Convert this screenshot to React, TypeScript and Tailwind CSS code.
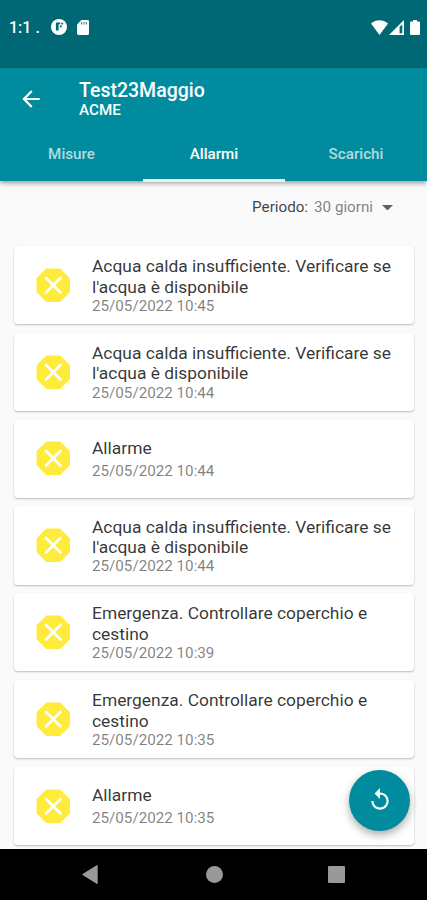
import React from "react";

interface Alarm {
  title: string;
  date: string;
}

const alarms: Alarm[] = [
  { title: "Acqua calda insufficiente. Verificare se l'acqua è disponibile", date: "25/05/2022 10:45" },
  { title: "Acqua calda insufficiente. Verificare se l'acqua è disponibile", date: "25/05/2022 10:44" },
  { title: "Allarme", date: "25/05/2022 10:44" },
  { title: "Acqua calda insufficiente. Verificare se l'acqua è disponibile", date: "25/05/2022 10:44" },
  { title: "Emergenza. Controllare coperchio e cestino", date: "25/05/2022 10:39" },
  { title: "Emergenza. Controllare coperchio e cestino", date: "25/05/2022 10:35" },
  { title: "Allarme", date: "25/05/2022 10:35" },
];

const tabs = ["Misure", "Allarmi", "Scarichi"];

function StatusBar() {
  return (
    <div className="flex h-[68px] items-start justify-between bg-[#006874] pt-[17.5px] pr-[7px] pl-[9px] text-white">
      <div className="flex h-[19px] items-center">
        <span className="w-[42px] pt-px text-[16px] font-medium whitespace-pre">1:1 .</span>
        <svg className="h-4 w-4" viewBox="0 0 16 16">
          <circle cx="8" cy="8" r="8" fill="currentColor" />
          <path d="M4.9 4.500Q4.900 3.400 6 3.400H9.200V5.300H7.600V11.500H4.900zM10.300 3.700h1.800v1.700h-1.800zM8.800 6.400h2v1.800h-2z" fill="#006874" />
        </svg>
        <svg className="ml-[10px] h-[15px] w-3" viewBox="0 0 12 15">
          <path d="M4.500 0H10.600Q12 0 12 1.400V13.600Q12 15 10.600 15H1.400Q0 15 0 13.600V4.500z" fill="currentColor" />
          <path d="M4.600 2v2.600M7 2v2.600M9.400 2v2.600" stroke="#006874" strokeWidth="1.200" opacity=".7" />
        </svg>
      </div>
      <div className="flex h-[19px] items-center">
        <svg className="h-[15px] w-[17px]" viewBox="0 0 17 15">
          <path d="M0 3.600C4.800-.9 12.200-.9 17 3.600L8.500 15z" fill="currentColor" />
        </svg>
        <svg className="ml-px h-[15px] w-[15px]" viewBox="0 0 15 15">
          <path d="M0 15L15 0V15z" fill="currentColor" />
          <path d="M10.600 6.800L13.300 4.500V13.300H10.600z" fill="#006874" />
        </svg>
        <svg className="ml-[6px] h-[15px] w-[10px]" viewBox="0 0 10 15">
          <path d="M3 0h4v1.500h1.800Q10 1.500 10 2.700V13.800Q10 15 8.800 15H1.200Q0 15 0 13.800V2.700Q0 1.500 1.200 1.500H3z" fill="currentColor" />
        </svg>
      </div>
    </div>
  );
}

function Header() {
  return (
    <header className="relative z-10 h-[112.5px] bg-[#008c9e] text-white shadow-[0_2px_5px_rgba(0,0,0,0.4)]">
      <div className="flex h-[61px] items-center pl-[18px]">
        <svg className="h-[26px] w-[26px]" viewBox="0 0 24 24" fill="currentColor">
          <path d="M20 11H7.830l5.590-5.590L12 4l-8 8 8 8 1.410-1.410L7.830 13H20v-2z" />
        </svg>
        <div className="ml-[35px] pt-[2px] font-medium">
          <h1 className="text-[19.5px] leading-[21.5px]">Test23Maggio</h1>
          <p className="text-[15.200px] leading-[18px]">ACME</p>
        </div>
      </div>
      <nav className="grid h-[53px] grid-cols-[143px_142px_142px]">
        {tabs.map((tab) => (
          <div
            key={tab}
            className={`flex items-center justify-center border-b-[3px] text-[15.200px] font-medium ${
              tab === "Allarmi" ? "border-[#e6f3f5] text-white" : "border-transparent text-white/70"
            }`}
          >
            {tab}
          </div>
        ))}
      </nav>
    </header>
  );
}

function AlarmCard({ title, date }: Alarm) {
  const short = title === "Allarme";

  return (
    <li className="flex h-[78.200px] shrink-0 items-center rounded-[4px] bg-white pr-[16px] pl-[16.500px] shadow-[0_1px_2px_rgba(0,0,0,0.25)]">
      <svg className="h-[44.500px] w-[44.500px] shrink-0 text-[#ffeb3b]" viewBox="0 0 24 24" fill="currentColor">
        <path d="M15.730 3H8.270L3 8.270v7.460L8.270 21h7.460L21 15.730V8.270L15.730 3zM16.800 15.800L15.800 16.800 12 13.050 8.200 16.800 7.200 15.800 10.950 12 7.200 8.200 8.200 7.200 12 10.950 15.800 7.200 16.800 8.200 13.050 12 16.800 15.800z" />
      </svg>
      <div className="ml-[17px] min-w-0 pt-[1px]">
        <p className="text-[17.400px] leading-[20.400px] text-black/80">{title}</p>
        <p className={`text-[15.200px] leading-[18px] text-black/50 ${short ? "mt-[3.500px]" : ""}`}>{date}</p>
      </div>
    </li>
  );
}

function App() {
  return (
    <div className="relative flex h-[900px] w-[427px] flex-col overflow-hidden bg-[#fafafa] font-[Roboto,sans-serif]">
      <StatusBar />
      <Header />
      <main className="flex min-h-0 flex-1 flex-col">
        <div className="flex h-[65.500px] shrink-0 items-start justify-end pt-[16px] pr-[34px] text-[15.200px] leading-[20px]">
          <span className="text-black/75">Periodo:</span>
          <span className="ml-[6px] text-black/50">30 giorni</span>
          <svg className="mt-[8px] ml-[9px] h-[5.500px] w-[11px]" viewBox="0 0 10 5">
            <path d="M0 0l5 5 5-5z" fill="#616161" />
          </svg>
        </div>
        <ul className="flex flex-col gap-[8.600px] pr-[13px] pl-[14px]">
          {alarms.map((alarm, idx) => (
            <AlarmCard key={idx} {...alarm} />
          ))}
        </ul>
      </main>
      <button className="absolute top-[769.500px] left-[349px] flex h-[61px] w-[61px] items-center justify-center rounded-full bg-[#008c9e] text-white shadow-[0_4px_8px_rgba(0,0,0,0.32)]">
        <svg className="h-[26px] w-[26px]" viewBox="0 0 24 24" fill="currentColor">
          <path d="M12 5V1L7 6l5 5V7c3.310 0 6 2.690 6 6s-2.690 6-6 6-6-2.690-6-6H4c0 4.420 3.580 8 8 8s8-3.580 8-8-3.580-8-8-8z" />
        </svg>
      </button>
      <div className="relative flex h-[51.500px] shrink-0 items-center bg-black pl-[82px] text-[#999]">
        <svg className="h-[19px] w-[16px]" viewBox="0 0 16 19">
          <path d="M15 .8v17.400L1 9.500z" fill="currentColor" stroke="currentColor" strokeWidth="1.400" strokeLinejoin="round" />
        </svg>
        <div className="ml-[108px] h-[16.500px] w-[16.500px] rounded-full bg-[#999]" />
        <div className="ml-[105.500px] h-[17px] w-[17px] rounded-[1px] bg-[#999]" />
      </div>
    </div>
  );
}

export default App;
